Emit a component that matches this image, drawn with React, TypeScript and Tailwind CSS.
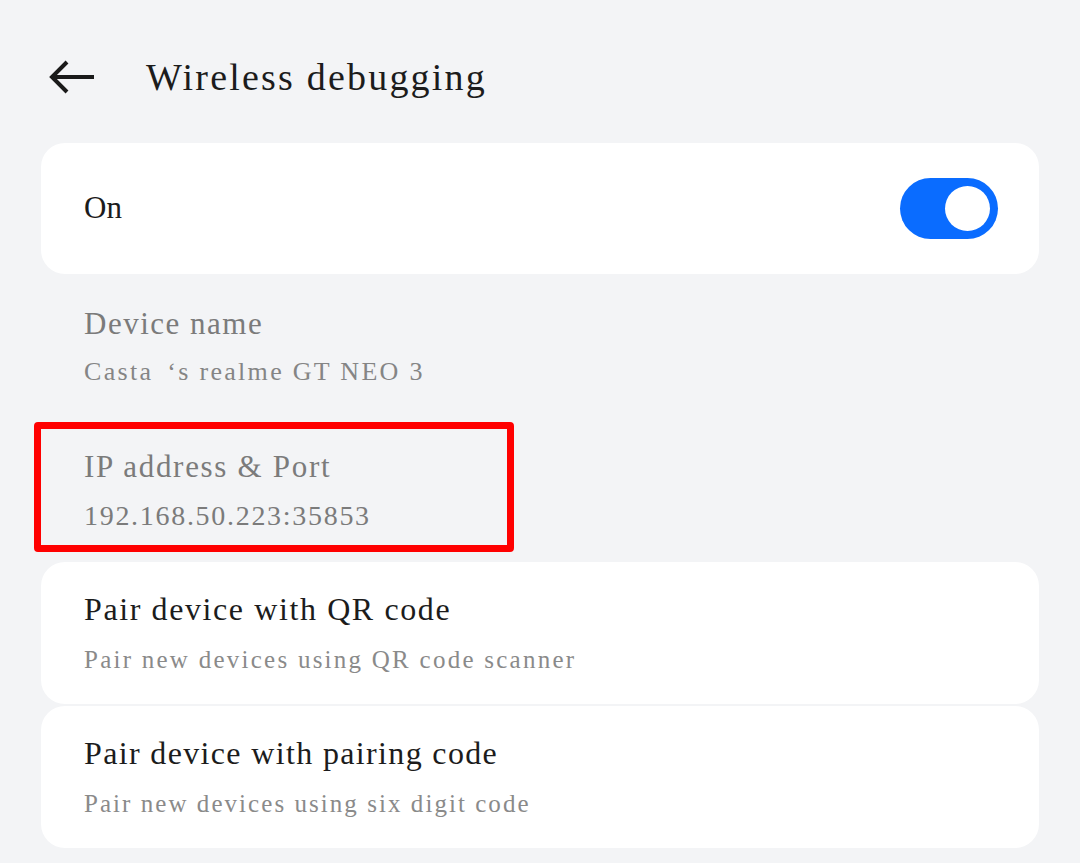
import React from "react";

const serif = { fontFamily: '"Liberation Serif", "DejaVu Serif", serif' };

export default function App() {
  return (
    <div className="w-[1080px] h-[863px] bg-[#f3f4f6] overflow-hidden" style={serif}>
      <div className="flex items-center h-[155px] pl-[48px] pb-[2px] -mb-[12px]">
        <svg width="48" height="34" viewBox="0 0 48 34" className="shrink-0">
          <path d="M46 17 H4 M19 2 L4 17 L19 32" fill="none" stroke="#1a1a1a" strokeWidth="4" strokeLinecap="butt" strokeLinejoin="miter" />
        </svg>
        <div className="ml-[50px] text-[38px] tracking-[2.2px] text-[#1c1c1c] leading-none">Wireless debugging</div>
      </div>
      <div className="px-[41px] flex flex-col">
        <div className="bg-white rounded-[24px] h-[131px] flex items-center justify-between pl-[43px] pr-[41px]">
          <div className="text-[31px] text-[#1c1c1c]">On</div>
          <div className="w-[98px] h-[61px] rounded-full bg-[#0a6cff] flex items-center justify-end pr-[8px]">
            <div className="w-[45px] h-[45px] rounded-full bg-white" />
          </div>
        </div>
        <div className="pl-[43px] pt-[30px] pb-[32px]">
          <div className="text-[31px] tracking-[1.5px] text-[#7b7b7b] leading-[40px]">Device name</div>
          <div className="text-[26px] tracking-[2.3px] text-[#858585] leading-[36px] mt-[10px]">
            Casta<span className="inline-block w-[14px]" />‘s realme GT NEO 3
          </div>
        </div>
        <div className="-ml-[7px] w-[480px] h-[130px] border-[7px] border-[#ff0000] rounded-[4px] pl-[43px] pt-[18px]">
          <div className="text-[31px] tracking-[1.7px] text-[#7b7b7b] leading-[40px]">IP address &amp; Port</div>
          <div className="text-[28px] tracking-[1.7px] text-[#7b7b7b] leading-[36px] mt-[11px]">192.168.50.223:35853</div>
        </div>
        <div className="mt-[10px] bg-white rounded-[24px] h-[142px] pl-[43px] pt-[27px]">
          <div className="text-[32px] tracking-[1.6px] text-[#1c1c1c] leading-[40px]">Pair device with QR code</div>
          <div className="text-[25px] tracking-[2.25px] text-[#8a8a8a] leading-[34px] mt-[14px]">Pair new devices using QR code scanner</div>
        </div>
        <div className="mt-[2px] bg-white rounded-[24px] h-[142px] pl-[43px] pt-[27px]">
          <div className="text-[32px] tracking-[1.35px] text-[#1c1c1c] leading-[40px]">Pair device with pairing code</div>
          <div className="text-[25px] tracking-[2.05px] text-[#8a8a8a] leading-[34px] mt-[14px]">Pair new devices using six digit code</div>
        </div>
      </div>
    </div>
  );
}
